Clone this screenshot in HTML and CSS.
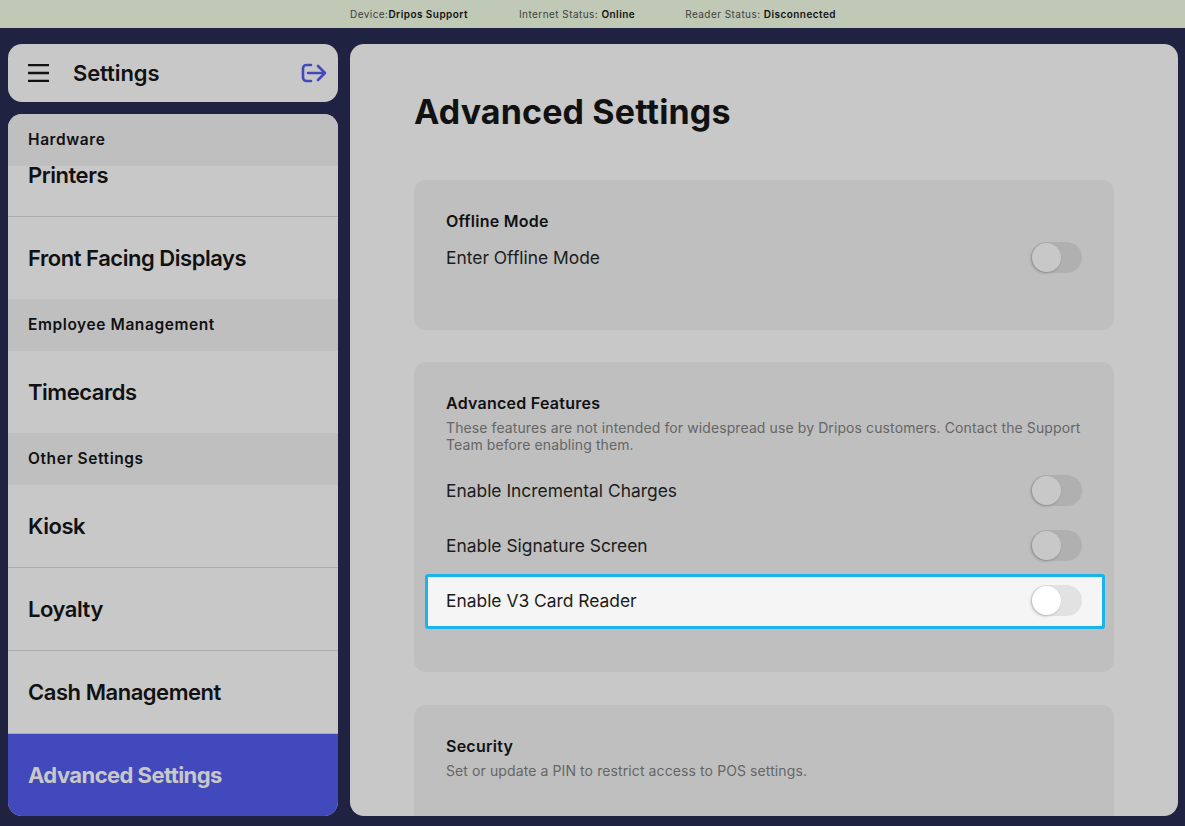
FILE: index.html
```html
<!DOCTYPE html>
<html lang="en">
<head>
<meta charset="utf-8">
<title>Advanced Settings</title>
<link rel="stylesheet" href="styles.css">
</head>
<body>
<div class="app">
  <header class="status">
    <span class="stat stat-device">Device:<b>Dripos Support</b></span>
    <span class="stat stat-net">Internet Status: <b>Online</b></span>
    <span class="stat">Reader Status: <b>Disconnected</b></span>
  </header>
  <div class="content">
    <aside class="side">
      <div class="side-head">
        <svg class="menu-icon" viewBox="0 0 21 18" width="21" height="18" aria-hidden="true"><path d="M0 1h21M0 9h21M0 17h21" fill="none" stroke="#111" stroke-width="2.400"/></svg>
        <span class="side-title">Settings</span>
        <svg class="exit-icon" viewBox="0 0 26 20" width="26" height="20" aria-hidden="true"><path d="M10 2H5.500A3.500 3.500 0 0 0 2 5.500v9A3.500 3.500 0 0 0 5.500 18H10M7 10h17M17 3l7 7-7 7" fill="none" stroke="#4249bd" stroke-width="2.600" stroke-linecap="round" stroke-linejoin="round"/></svg>
      </div>
      <nav class="side-list">
        <div class="group group-over">Hardware</div>
        <div class="item item-first">Printers</div>
        <div class="item item-last">Front Facing Displays</div>
        <div class="group">Employee Management</div>
        <div class="item item-last">Timecards</div>
        <div class="group">Other Settings</div>
        <div class="item">Kiosk</div>
        <div class="item">Loyalty</div>
        <div class="item">Cash Management</div>
        <div class="item item-active">Advanced Settings</div>
      </nav>
    </aside>
    <main class="main">
      <h1 class="page-title">Advanced Settings</h1>
      <section class="card card-offline">
        <h2 class="card-title">Offline Mode</h2>
        <div class="row"><span>Enter Offline Mode</span><span class="toggle"><span class="knob"></span></span></div>
      </section>
      <section class="card card-adv">
        <h2 class="card-title">Advanced Features</h2>
        <p class="card-desc">These features are not intended for widespread use by Dripos customers. Contact the Support Team before enabling them.</p>
        <div class="row"><span>Enable Incremental Charges</span><span class="toggle"><span class="knob"></span></span></div>
        <div class="row"><span>Enable Signature Screen</span><span class="toggle"><span class="knob"></span></span></div>
        <div class="row row-hl"><span>Enable V3 Card Reader</span><span class="toggle toggle-hl"><span class="knob knob-hl"></span></span></div>
      </section>
      <section class="card card-sec">
        <h2 class="card-title">Security</h2>
        <p class="card-desc">Set or update a PIN to restrict access to POS settings.</p>
      </section>
    </main>
  </div>
</div>
</body>
</html>
```
FILE: styles.css
```css
* { box-sizing: border-box; }
html, body { margin: 0; padding: 0; height: 100%; }
body { background: #1f2240; font-family: Inter, "Liberation Sans", sans-serif; color: #111; overflow: hidden; }
.app { height: 826px; display: flex; flex-direction: column; }
.status { height: 28px; flex: none; background: #c0c9b6; display: flex; justify-content: center; align-items: center; gap: 50px; padding-left: 1px; font-size: 10px; letter-spacing: .45px; color: #3d3f3c; }
.stat-net { margin-left: 1px; }
.status b { color: #111; font-weight: 600; }
.content { flex: 1; min-height: 0; display: flex; gap: 12px; padding: 16px 7px 10px 8px; }
.side { width: 330px; flex: none; display: flex; flex-direction: column; gap: 12px; }
.side-head { height: 58px; flex: none; background: #c8c8c8; border-radius: 14px; display: flex; align-items: center; padding: 0 11px 0 20px; }
.menu-icon { flex: none; }
.side-title { font-size: 22px; font-weight: 600; margin-left: 24px; flex: 1; letter-spacing: -.1px; }
.exit-icon { flex: none; }
.side-list { flex: 1; min-height: 0; background: #c8c8c8; border-radius: 14px; overflow: hidden; display: flex; flex-direction: column; }
.group { height: 52px; flex: none; background: #bfbfbf; display: flex; align-items: center; padding: 0 0 2px 20px; font-size: 15.500px; font-weight: 600; letter-spacing: .58px; }
.group-over { position: relative; z-index: 1; }
.item { height: 83px; flex: none; display: flex; align-items: center; padding: 0 20px 1px; font-size: 22px; font-weight: 600; letter-spacing: -.46px; border-bottom: 1px solid #adadad; }
.item-first { margin-top: -32px; }
.item-last { height: 82px; border-bottom: 0; }
.item-active { height: 82px; border-bottom: 0; background: #4249bd; color: #c8c8c8; font-weight: 700; letter-spacing: -.56px; padding-bottom: 0; }
.main { flex: 1; min-width: 0; background: #c8c8c8; border-radius: 14px; overflow: hidden; padding: 0 64px; }
.page-title { margin: 46px 0 46px; font-size: 34px; line-height: 44px; font-weight: 700; letter-spacing: .14px; }
.card { background: #bfbfbf; border-radius: 12px; padding: 32px 32px 0; margin-bottom: 32px; }
.card-offline { height: 150px; }
.card-adv { height: 310px; margin-bottom: 33px; }
.card-sec { height: 200px; }
.card-title { margin: 0; font-size: 16px; line-height: 18px; font-weight: 600; letter-spacing: .25px; }
.card-desc { margin: 7px 0 0; font-size: 14px; line-height: 17px; color: #666; letter-spacing: .1px; }
.card-desc + .row { margin-top: 11px; }
.card-offline .row { margin-top: 1px; }
.row { height: 55px; display: flex; align-items: center; justify-content: space-between; padding-bottom: 2px; font-size: 17.400px; color: #1c1c1c; }
.row-hl { background: #f5f5f5; border: 3px solid #1ab3ea; border-radius: 3px; margin: 0 -23px 0 -21px; padding: 0 20px 2px 18px; }
.toggle { width: 51px; height: 31px; border-radius: 16px; background: #b0b0b0; position: relative; flex: none; display: block; }
.knob { position: absolute; top: 1px; left: 1px; width: 29px; height: 29px; border-radius: 50%; background: #c8c8c8; box-shadow: -1px 1px 3px rgba(0, 0, 0, .22); }
.toggle-hl { background: #e2e2e2; }
.knob-hl { background: #fff; }
```
